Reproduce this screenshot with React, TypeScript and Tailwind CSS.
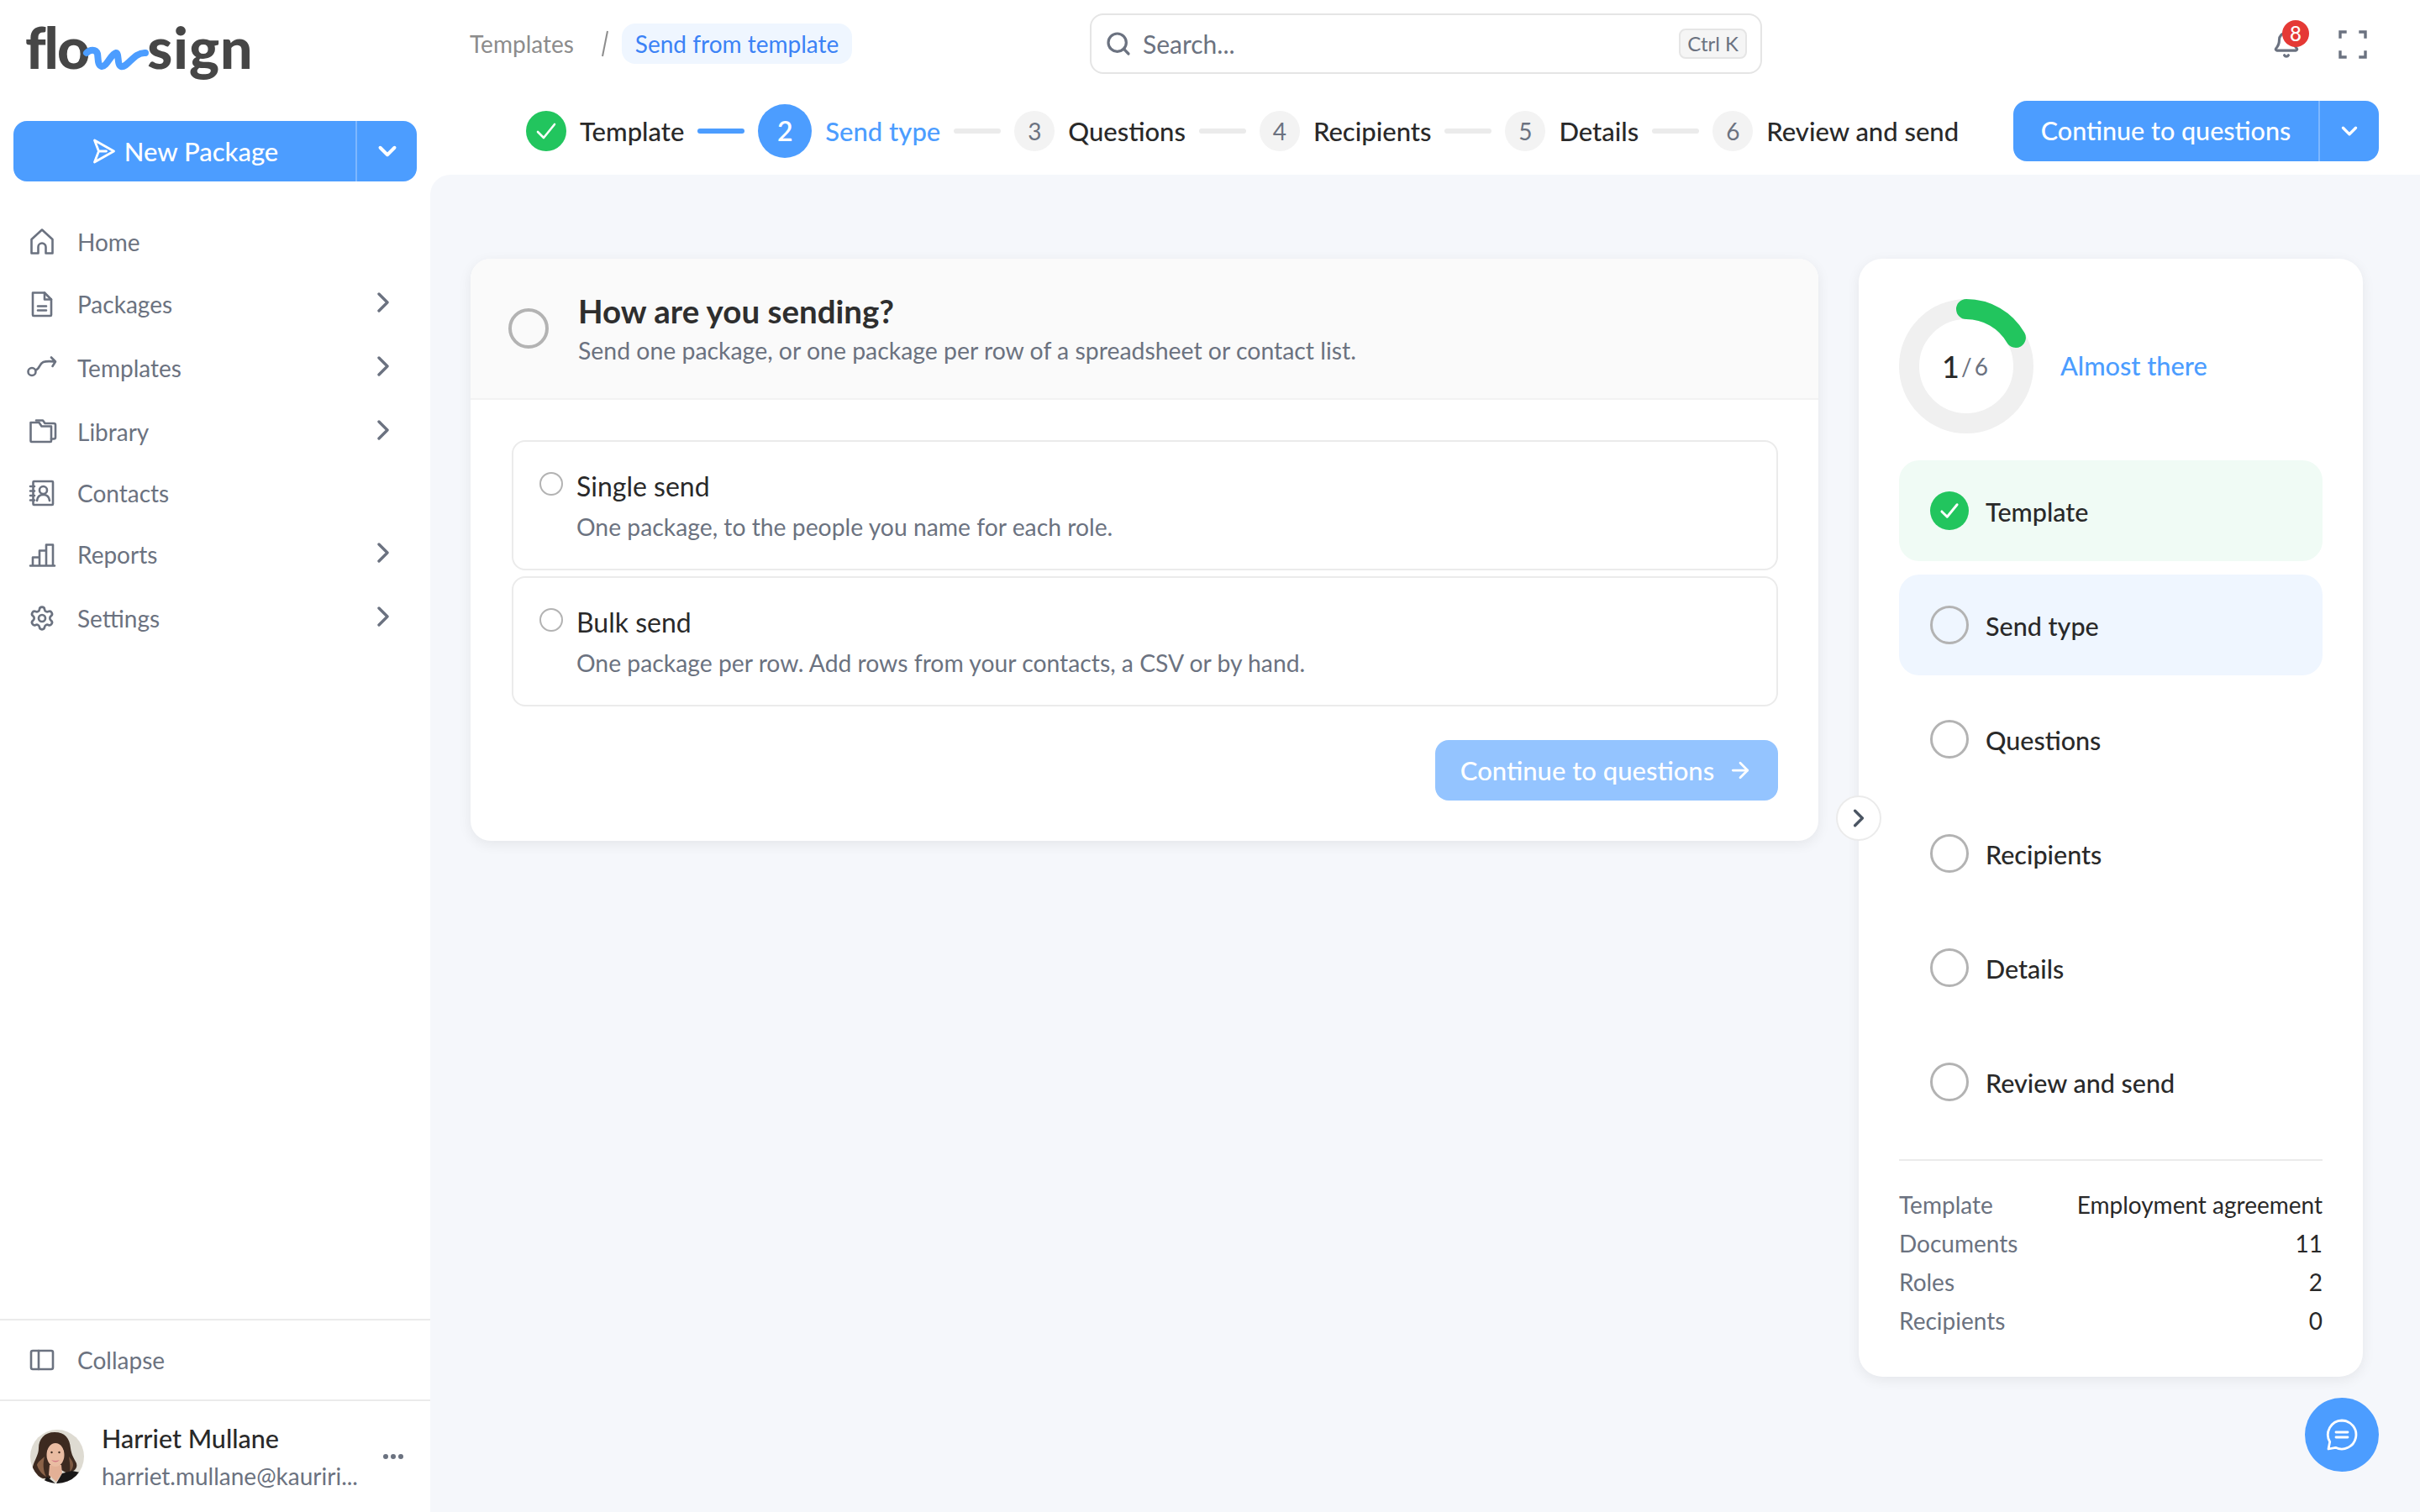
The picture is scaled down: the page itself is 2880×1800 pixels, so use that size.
import { ArrowRight, Bell, ChevronDown, Search, Settings } from "lucide-react";
import type { ReactNode } from "react";

const iconProps = {
  width: 32,
  height: 32,
  viewBox: "0 0 32 32",
  fill: "none",
  stroke: "currentColor",
  strokeWidth: 2.6,
  strokeLinecap: "round" as const,
  strokeLinejoin: "round" as const,
  className: "shrink-0 overflow-visible",
};

function HomeIcon() {
  return (
    <svg {...iconProps}>
      <path d="M3.500 29.500V13L16 1.500 28.500 13v16.500h-8V22a4.500 4.500 0 0 0-9 0v7.500z" />
    </svg>
  );
}

function PackagesIcon() {
  return (
    <svg {...iconProps}>
      <path d="M5 2.500h14l8 8V29a1 1 0 0 1-1 1H6a1 1 0 0 1-1-1z" />
      <path d="M19 2.500v8h8M11 18.500h10M11 23.500h10" />
    </svg>
  );
}

function TemplatesIcon() {
  return (
    <svg {...iconProps}>
      <circle cx="4" cy="20.500" r="4.500" />
      <path d="M8.500 18.500c5-1 4-7.500 9-9.500 4-1.500 8-1 14-.500M27 3.500l5 5-3.500 5.500" />
    </svg>
  );
}

function LibraryIcon() {
  return (
    <svg {...iconProps}>
      <path d="M2.500 27V5h10l3 4.500H27V27a1 1 0 0 1-1 1H3.500a1 1 0 0 1-1-1z" />
      <path d="M9 2.500h8l2.500 3.500h10.500a2 2 0 0 1 2 2v14.500a2 2 0 0 1-2 2H27" />
    </svg>
  );
}

function ContactsIcon() {
  return (
    <svg {...iconProps}>
      <rect x="5.500" y="2" width="23.500" height="28" rx="1" />
      <circle cx="17.500" cy="12.500" r="4.500" />
      <path d="M10 25c.5-4.500 3.500-7 7.500-7s7 2.500 7.500 7M2 8h5M2 13.500h5M2 19h5M2 24.500h5" />
    </svg>
  );
}

function ReportsIcon() {
  return (
    <svg {...iconProps}>
      <path d="M2 29.500h29M5 29.500V19.500h8M13 29.500V11.500h8v18M21 29.500V4.500h8v25" />
    </svg>
  );
}

function CollapseIcon() {
  return (
    <svg {...iconProps}>
      <rect x="3" y="5" width="26" height="22" rx="2" />
      <path d="M12 5v22" />
    </svg>
  );
}

function NavChevron() {
  return (
    <svg width="16" height="24" viewBox="0 0 16 24" fill="none" stroke="currentColor" strokeWidth="3.400" strokeLinecap="round" strokeLinejoin="round" className="-mt-[4px] text-[#6b7280]">
      <path d="M3 2l10 10L3 22" />
    </svg>
  );
}

function Logo() {
  return (
    <div className="flex h-[96px] items-start pl-[30px] pt-[6px] font-['Lato',sans-serif] text-[68px] leading-[68px] font-black text-[#464646]">
      <span className="tracking-[-2px]">flo</span>
      <svg width="80" height="40" viewBox="0 0 80 40" fill="none" className="-ml-[7px] -mr-[3px] mt-[30px] shrink-0">
        <path d="M5 11c4-4 11-5 13 1 1 6 0 14 5 15 6 1 11-15 17-16 4 0 1 14 6 16 8 2 15-17 29-16" stroke="#4c9dff" strokeWidth="8" strokeLinecap="round" strokeLinejoin="round" />
      </svg>
      <span className="tracking-[1px]">sign</span>
    </div>
  );
}

function Avatar() {
  return (
    <svg width="64" height="64" viewBox="0 0 64 64" className="shrink-0 rounded-full">
      <rect width="64" height="64" fill="#dedbd2" />
      <path d="M29 3C17 3 10 11 10 22c0 8-5 14-7 22-1 6 3 11 12 14h9V48h13l7 4c7-2 13-5 11-12-3-6-6-10-7-18C47 10 41 3 29 3z" fill="#3d2a20" />
      <path d="M8 42c2 6 5 10 11 14-4-8-4-16-2-24-3 3-8 6-9 10z" fill="#8a6248" />
      <path d="M49 36c3 4 3 10-2 14 1-6 0-10-1-18z" fill="#7d5942" />
      <path d="M23 42h14l1 10-7 10-9-8z" fill="#e3b096" />
      <ellipse cx="30" cy="30" rx="10.500" ry="14" fill="#eabca2" />
      <path d="M19 28c1-8 7-14 14-15 4 4 7 9 8 15 2-10-3-19-12-19-8 0-12 9-10 19z" fill="#3d2a20" />
      <circle cx="25.500" cy="27" r="1.200" fill="#3d2a20" />
      <circle cx="34.500" cy="27" r="1.200" fill="#3d2a20" />
      <path d="M25 36q5 5 10 0-5 2-10 0z" fill="#d47c86" />
      <path d="M38 52l-7 12h33V52l-14-3zM20 56l10 8H14z" fill="#191717" />
    </svg>
  );
}

function NavItem({ icon, label, chevron, height = "h-[76px]" }: { icon: ReactNode; label: string; chevron?: boolean; height?: string }) {
  return (
    <div className={`flex items-center justify-between pl-[34px] pr-[48px] text-[#6b7280] ${height}`}>
      <div className="flex items-center gap-[26px]">
        {icon}
        <span className="text-[28px]">{label}</span>
      </div>
      {chevron && <NavChevron />}
    </div>
  );
}

function Sidebar() {
  return (
    <aside className="flex h-full w-[512px] shrink-0 flex-col">
      <div className="pt-[16px]">
        <Logo />
      </div>
      <div className="mx-[16px] mt-[32px] flex h-[72px] rounded-[16px] bg-[#4c9dff] text-white">
        <div className="flex flex-1 items-center justify-center gap-[10px] pl-[2px]">
          <svg width="28" height="30" viewBox="0 0 28 30" fill="none" stroke="white" strokeWidth="2.800" strokeLinejoin="round" strokeLinecap="round">
            <path d="M2.500 2l23 13-23 13 5-13zM7.500 15h9" />
          </svg>
          <span className="text-[31px] font-medium">New Package</span>
        </div>
        <div className="flex w-[73px] items-center justify-center border-l-2 border-[#7db7ff]">
          <ChevronDown size={34} strokeWidth={2.800} />
        </div>
      </div>
      <nav className="mt-[36px] flex flex-col">
        <NavItem icon={<HomeIcon />} label="Home" height="h-[72px]" />
        <NavItem icon={<PackagesIcon />} label="Packages" chevron />
        <NavItem icon={<TemplatesIcon />} label="Templates" chevron />
        <NavItem icon={<LibraryIcon />} label="Library" chevron />
        <NavItem icon={<ContactsIcon />} label="Contacts" height="h-[70px]" />
        <NavItem icon={<ReportsIcon />} label="Reports" chevron />
        <NavItem icon={<Settings size={32} strokeWidth={2} className="shrink-0" />} label="Settings" chevron />
      </nav>
      <div className="mt-auto flex h-[96px] items-center gap-[26px] border-t-2 border-[#ebebeb] pl-[34px] text-[#6b7280]">
        <CollapseIcon />
        <span className="text-[28px]">Collapse</span>
      </div>
      <div className="flex h-[134px] items-center border-t-2 border-[#ebebeb] pl-[36px] pr-[32px]">
        <Avatar />
        <div className="ml-[21px] flex min-w-0 flex-1 flex-col gap-[10px]">
          <span className="text-[30.500px] leading-[36px] font-medium text-[#292929]">Harriet Mullane</span>
          <span className="truncate text-[28px] leading-[34px] text-[#6b7280]">harriet.mullane@kauriri...</span>
        </div>
        <div className="flex gap-[3px]">
          <span className="h-[6px] w-[6px] rounded-full bg-[#6b7280]" />
          <span className="h-[6px] w-[6px] rounded-full bg-[#6b7280]" />
          <span className="h-[6px] w-[6px] rounded-full bg-[#6b7280]" />
        </div>
      </div>
    </aside>
  );
}

function Connector({ active }: { active?: boolean }) {
  return <span className={`h-[6px] w-[56px] rounded-full ${active ? "bg-[#4c9dff]" : "bg-[#ebebeb]"}`} />;
}

function StepNumber({ n, label }: { n: number; label: string }) {
  return (
    <>
      <span className="flex h-[48px] w-[48px] items-center justify-center rounded-full bg-[#f3f3f3] text-[28px] text-[#6b7280]">{n}</span>
      <span className="text-[31px] font-medium text-[#292929]">{label}</span>
    </>
  );
}

function TopBar() {
  return (
    <header className="flex h-[208px] flex-col pt-[16px]">
      <div className="flex h-[72px] items-center">
        <div className="flex w-[785px] shrink-0 items-center pl-[47px]">
          <span className="text-[28px] text-[#8c8c8c]">Templates</span>
          <svg width="14" height="34" viewBox="0 0 14 34" className="ml-[30px] mr-[13px]">
            <path d="M10 2L4 32" stroke="#8c8c8c" strokeWidth="2" />
          </svg>
          <span className="flex h-[48px] items-center rounded-[16px] bg-[#eff6ff] px-[16px] text-[28px] text-[#3b82f6]">Send from template</span>
        </div>
        <div className="flex h-[72px] w-[800px] items-center rounded-[16px] border-2 border-[#e5e5e5] pl-[16px] pr-[16px]">
          <Search size={32} strokeWidth={2.400} className="text-[#6b7280]" />
          <span className="ml-[13px] text-[30px] text-[#6b7280]">Search...</span>
          <span className="ml-auto flex h-[36px] items-center rounded-[8px] border-2 border-[#e5e5e5] bg-[#f5f5f5] px-[8px] text-[24px] text-[#6b7280]">Ctrl K</span>
        </div>
        <div className="relative ml-[607px] flex items-center gap-[45px] pt-[2px] text-[#6b7280]">
          <div className="relative">
            <Bell size={34} strokeWidth={2.200} />
            <span className="absolute -right-[10px] -top-[12px] flex h-[32px] w-[32px] items-center justify-center rounded-full bg-[#e53935] text-[24px] font-medium text-white">8</span>
          </div>
          <svg width="34" height="34" viewBox="0 0 34 34" fill="none" stroke="currentColor" strokeWidth="3.400" strokeLinecap="square">
            <path d="M2 8V2h6M26 2h6v6M32 26v6h-6M8 32H2v-6" />
          </svg>
        </div>
      </div>
      <div className="mt-[32px] flex h-[72px] items-center pl-[114px] pr-[49px]">
        <div className="flex items-center gap-[16px]">
          <span className="flex h-[48px] w-[48px] items-center justify-center rounded-full bg-[#22c55e]">
            <svg width="26" height="22" viewBox="0 0 26 22" fill="none" stroke="white" strokeWidth="2.600" strokeLinecap="round" strokeLinejoin="round">
              <path d="M3 12l7 7L23 3" />
            </svg>
          </span>
          <span className="text-[31px] font-medium text-[#292929]">Template</span>
          <Connector active />
          <span className="flex h-[64px] w-[64px] items-center justify-center rounded-full bg-[#4c9dff] text-[32px] font-semibold text-white">2</span>
          <span className="text-[31px] font-medium text-[#4c9dff]">Send type</span>
          <Connector />
          <StepNumber n={3} label="Questions" />
          <Connector />
          <StepNumber n={4} label="Recipients" />
          <Connector />
          <StepNumber n={5} label="Details" />
          <Connector />
          <StepNumber n={6} label="Review and send" />
        </div>
        <div className="ml-auto flex h-[72px] w-[435px] rounded-[16px] bg-[#4c9dff] text-white">
          <span className="flex flex-1 items-center justify-center text-[30.500px] font-medium">Continue to questions</span>
          <span className="flex w-[72px] items-center justify-center border-l-2 border-[#7db7ff]">
            <ChevronDown size={30} strokeWidth={2.600} />
          </span>
        </div>
      </div>
    </header>
  );
}

function SendOption({ label, description }: { label: string; description: string }) {
  return (
    <div className="flex h-[155px] rounded-[16px] border-2 border-[#ebebeb] pl-[31px] pt-[35px]">
      <span className="mt-[1px] h-[28px] w-[28px] shrink-0 rounded-full border-2 border-[#b3b3b3]" />
      <div className="ml-[16px] flex flex-col">
        <span className="text-[32px] leading-[36px] text-[#292929]">{label}</span>
        <span className="mt-[12px] text-[28.300px] leading-[36px] text-[#6b7280]">{description}</span>
      </div>
    </div>
  );
}

function MainCard() {
  return (
    <section className="flex-1 overflow-hidden rounded-[24px] bg-white shadow-[0_4px_16px_rgba(0,0,0,0.07)]">
      <div className="flex h-[168px] items-center border-b-2 border-[#f2f2f2] bg-[#fafafa] pl-[45px]">
        <span className="h-[48px] w-[48px] rounded-full border-[4px] border-[#b3b3b3]" />
        <div className="ml-[35px] flex flex-col">
          <h1 className="text-[38.500px] leading-[46px] font-bold text-[#2e2e2e]">How are you sending?</h1>
          <p className="mt-[6px] text-[28.400px] leading-[36px] text-[#6b7280]">Send one package, or one package per row of a spreadsheet or contact list.</p>
        </div>
      </div>
      <div className="flex flex-col pl-[49px] pr-[48px] pt-[48px] pb-[48px]">
        <div className="flex flex-col gap-[7px]">
          <SendOption label="Single send" description="One package, to the people you name for each role." />
          <SendOption label="Bulk send" description="One package per row. Add rows from your contacts, a CSV or by hand." />
        </div>
        <div className="mt-[40px] flex justify-end">
          <div className="flex h-[72px] w-[408px] items-center justify-center gap-[16px] rounded-[16px] bg-[#94c4ff] text-white">
            <span className="text-[31px] font-medium">Continue to questions</span>
            <ArrowRight size={30} strokeWidth={2.200} />
          </div>
        </div>
      </div>
    </section>
  );
}

function ProgressRow({ label, state }: { label: string; state?: "done" | "current" }) {
  const bg = state === "done" ? "bg-[#f0fbf5]" : state === "current" ? "bg-[#eff6ff]" : "";
  return (
    <div className={`flex h-[120px] items-center gap-[20px] rounded-[24px] pl-[37px] ${bg}`}>
      {state === "done" ? (
        <span className="flex h-[46px] w-[46px] items-center justify-center rounded-full bg-[#22c55e]">
          <svg width="24" height="20" viewBox="0 0 26 22" fill="none" stroke="white" strokeWidth="3.200" strokeLinecap="round" strokeLinejoin="round">
            <path d="M3 12l7 7L23 3" />
          </svg>
        </span>
      ) : (
        <span className="h-[46px] w-[46px] rounded-full border-[3px] border-[#b3b3b3]" />
      )}
      <span className="pt-[3px] text-[30.500px] font-medium text-[#292929]">{label}</span>
    </div>
  );
}

function SummaryRow({ label, value }: { label: string; value: string }) {
  return (
    <div className="flex h-[46px] items-center justify-between text-[28px]">
      <span className="text-[#6b7280]">{label}</span>
      <span className="text-[#292929]">{value}</span>
    </div>
  );
}

function ProgressCard() {
  return (
    <aside className="relative w-[600px] shrink-0 rounded-[28px] bg-white p-[48px] pb-[44px] shadow-[0_4px_16px_rgba(0,0,0,0.07)]">
      <button className="absolute -left-[27px] top-[639px] flex h-[54px] w-[54px] items-center justify-center rounded-full border-2 border-[#ebebeb] bg-white text-[#4b5563]">
        <svg width="14" height="22" viewBox="0 0 16 24" fill="none" stroke="currentColor" strokeWidth="3.800" strokeLinecap="round" strokeLinejoin="round">
          <path d="M3 2l10 10L3 22" />
        </svg>
      </button>
      <div className="flex items-center gap-[32px]">
        <div className="relative h-[160px] w-[160px]">
          <svg width="160" height="160" viewBox="0 0 160 160" fill="none">
            <circle cx="80" cy="80" r="68" stroke="#f0f0f0" strokeWidth="24" />
            <path d="M80 12a68 68 0 0 1 58.900 34" stroke="#22c55e" strokeWidth="24" strokeLinecap="round" />
          </svg>
          <div className="absolute inset-0 flex items-center justify-center">
            <span className="text-[36px] font-medium text-[#292929]">1</span>
            <span className="ml-[2px] text-[28px] tracking-[3px] text-[#6b7280]">/6</span>
          </div>
        </div>
        <span className="text-[30.700px] font-medium text-[#4c9dff]">Almost there</span>
      </div>
      <div className="mt-[32px] flex flex-col gap-[16px]">
        <ProgressRow label="Template" state="done" />
        <ProgressRow label="Send type" state="current" />
        <ProgressRow label="Questions" />
        <ProgressRow label="Recipients" />
        <ProgressRow label="Details" />
        <ProgressRow label="Review and send" />
      </div>
      <div className="mt-[32px] flex flex-col border-t-2 border-[#ebebeb] pt-[29px]">
        <SummaryRow label="Template" value="Employment agreement" />
        <SummaryRow label="Documents" value="11" />
        <SummaryRow label="Roles" value="2" />
        <SummaryRow label="Recipients" value="0" />
      </div>
    </aside>
  );
}

export default function App() {
  return (
    <div className="relative flex h-[1800px] w-[2880px] overflow-hidden bg-white font-['Lato',sans-serif]">
      <Sidebar />
      <div className="flex min-w-0 flex-1 flex-col">
        <TopBar />
        <main className="flex flex-1 items-start gap-[48px] rounded-tl-[24px] bg-[#f5f7fb] pl-[48px] pr-[68px] pt-[100px]">
          <MainCard />
          <ProgressCard />
        </main>
      </div>
      <button className="absolute bottom-[48px] right-[49px] flex h-[88px] w-[88px] items-center justify-center rounded-full bg-[#4c9dff]">
        <svg width="38" height="38" viewBox="0 0 38 38" fill="none" stroke="white" strokeWidth="2.800" strokeLinecap="round" strokeLinejoin="round">
          <path d="M19 2a17 17 0 1 1-7.500 32.300L3 36l1.700-8.500A17 17 0 0 1 19 2z" />
          <path d="M12 16h14M12 22h14" />
        </svg>
      </button>
    </div>
  );
}
